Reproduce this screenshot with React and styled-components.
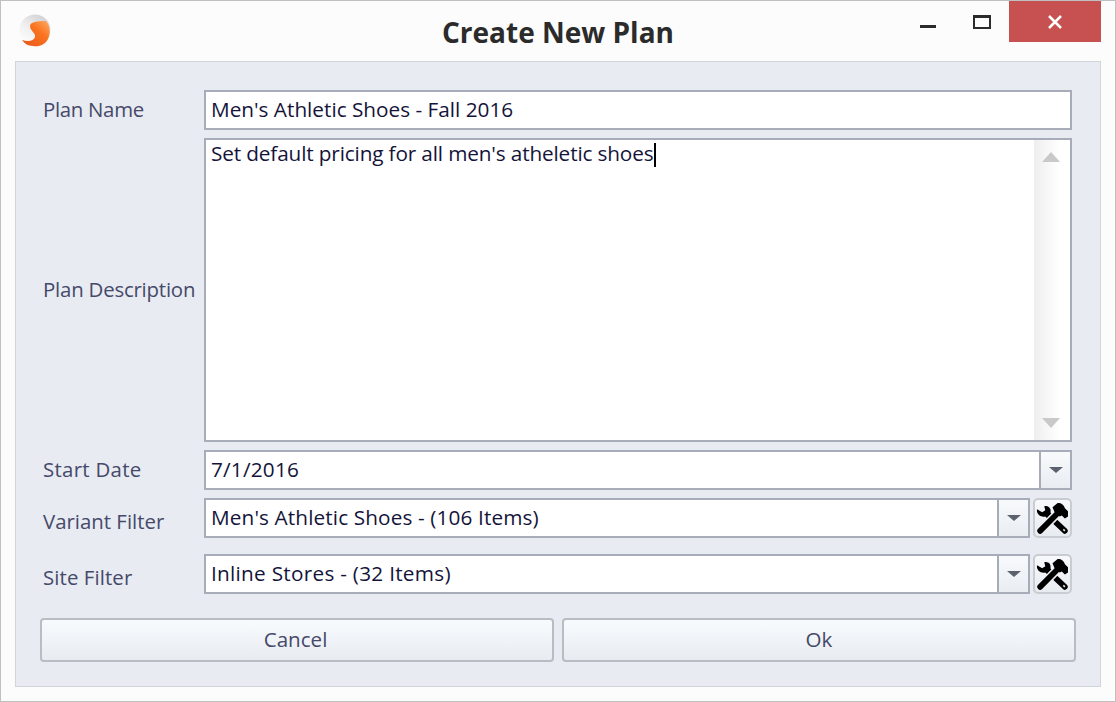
import React from "react";
import styled, { createGlobalStyle } from "styled-components";

const GlobalStyle = createGlobalStyle`
  html, body { margin: 0; padding: 0; background: #fcfcfc; }
  body { font-family: "Open Sans", "Noto Sans", sans-serif; }
`;

const Window = styled.div`
  box-sizing: border-box;
  width: 1116px;
  height: 702px;
  background: #fcfcfc;
  border: 1px solid #bfc0c1;
  display: flex;
  flex-direction: column;
`;

const TitleBar = styled.header`
  height: 60px;
  flex: none;
  display: grid;
  grid-template-columns: 1fr auto 1fr;
  align-items: flex-start;
`;

const AppLogo = styled.svg`
  width: 32px;
  height: 33px;
  margin: 13px 0 0 18px;
`;

const Title = styled.h1`
  margin: 12px 0 0;
  font-size: 28px;
  line-height: 38px;
  font-weight: 700;
  color: #2b2b2b;
`;

const WindowControls = styled.div`
  display: flex;
  justify-content: flex-end;
  margin-right: 14px;
`;

const ControlButton = styled.div`
  width: ${(p) => p.$w}px;
  height: 41px;
  display: flex;
  align-items: center;
  justify-content: center;
  background: ${(p) => (p.$close ? "#c75050" : "transparent")};
`;

const Panel = styled.main`
  box-sizing: border-box;
  width: 1086px;
  height: 626px;
  margin-left: 14px;
  background: #e8ebf1;
  border: 1px solid #d1d4d8;
  padding: 28px 24px 0;
`;

const FormGrid = styled.div`
  display: grid;
  grid-template-columns: 164px 1fr;
  row-gap: 8px;
  align-items: center;
  padding-right: 4px;
`;

const Label = styled.label`
  padding-left: 3px;
  font-size: 20.4px;
  line-height: 28px;
  color: #45496a;
  white-space: nowrap;
  position: relative;
  top: ${(p) => p.$shift || 0}px;
  margin-top: ${(p) => p.$gap || 0}px;
  letter-spacing: ${(p) => p.$track || 0}px;
`;

const Field = styled.div`
  box-sizing: border-box;
  height: ${(p) => p.$h || 40}px;
  background: #fff;
  border: 2px solid #a6adb9;
  display: flex;
  min-width: 0;
  flex: 1;
`;

const Value = styled.div`
  flex: 1;
  padding: 0 5px;
  font-size: 20.75px;
  line-height: ${(p) => (p.$multi ? 26 : 34)}px;
  letter-spacing: ${(p) => p.$track || 0}px;
  color: #14143a;
  white-space: nowrap;
`;

const Caret = styled.span`
  display: inline-block;
  width: 2px;
  height: 24px;
  margin-left: 1px;
  background: #000;
  vertical-align: -6px;
`;

const Scrollbar = styled.div`
  box-sizing: border-box;
  width: 36px;
  display: flex;
  flex-direction: column;
  justify-content: space-between;
  align-items: center;
  padding: 12px 2px 12px 0;
  background: linear-gradient(90deg, #eeeeef, #ffffff 70%);
`;

const Arrow = styled.i`
  width: 0;
  height: 0;
  border-left: 9px solid transparent;
  border-right: 9px solid transparent;
  ${(p) => (p.$up ? "border-bottom" : "border-top")}: 10px solid #c9c9c9;
`;

const DropButton = styled.div`
  box-sizing: border-box;
  width: 31px;
  flex: none;
  border-left: 2px solid #a6adb9;
  background: linear-gradient(180deg, #f8fafc, #e9edf2);
  display: flex;
  align-items: center;
  justify-content: center;
`;

const DropArrow = styled.i`
  width: 0;
  height: 0;
  border-left: 7px solid transparent;
  border-right: 7px solid transparent;
  border-top: 6px solid #5c626d;
`;

const FilterRow = styled.div`
  display: flex;
  gap: 3px;
  min-width: 0;
  margin-top: ${(p) => p.$gap || 0}px;
`;

const ToolButton = styled.div`
  box-sizing: border-box;
  width: 39px;
  height: 40px;
  flex: none;
  border: 2px solid #c9ccd1;
  border-radius: 5px;
  background: linear-gradient(180deg, #f7f9fc, #e8ebf0);
  display: flex;
  align-items: center;
  justify-content: center;
`;

const Actions = styled.div`
  display: grid;
  grid-template-columns: 1fr 1fr;
  column-gap: 8px;
  margin-top: 24px;
`;

const ActionButton = styled.button`
  box-sizing: border-box;
  height: 44px;
  padding: 0 ${(p) => p.$nudge || 0}px 2px 0;
  border: 2px solid #b9bcc2;
  border-radius: 4px;
  background: linear-gradient(180deg, #f8fbfe, #e8ebf0);
  font-family: inherit;
  font-size: 20.6px;
  color: #45496a;
`;

function ToolsIcon() {
  return (
    <svg width="33" height="33" viewBox="0 0 32 32">
      <path
        d="M1 7 L6 10 L9 8 L8 4 C12 3 15 6 14 10 L16 13 L12 16 L9 14 C5 15 0 12 1 7 Z"
        fill="#000"
      />
      <path d="M12 13 L28 28" stroke="#000" strokeWidth="5.500" strokeLinecap="round" />
      <path d="M26.500 26.500 L28 28" stroke="#e8ebf0" strokeWidth="1.500" />
      <path d="M19 13 L13 19" stroke="#eef0f4" strokeWidth="8.500" />
      <path d="M21 11 L4 28" stroke="#000" strokeWidth="5.500" strokeLinecap="round" />
      <path
        d="M16 5 L21 1 C25 1 27 3 28 6 L31 9 L31 14 L28 16 L25 13 L23 14 L18 10 Z"
        fill="#000"
      />
    </svg>
  );
}

function Logo() {
  return (
    <AppLogo viewBox="0 0 32 33">
      <defs>
        <linearGradient id="logoBase" x1="0.8" y1="0" x2="0.2" y2="1">
          <stop offset="0" stopColor="#cfcfd1" />
          <stop offset="0.5" stopColor="#eeeeee" />
          <stop offset="1" stopColor="#ffffff" />
        </linearGradient>
        <linearGradient id="logoSwirl" x1="0" y1="1" x2="1" y2="0">
          <stop offset="0" stopColor="#e8561c" />
          <stop offset="0.6" stopColor="#f9731f" />
          <stop offset="1" stopColor="#ffad66" />
        </linearGradient>
      </defs>
      <circle cx="16" cy="16" r="15.500" fill="url(#logoBase)" />
      <path
        d="M3 26 C9 28 15 27 16 23 C17 19 11 17 11 12 C11 8 18 7 27 7 C31 11 32 19 29 25 C26 31 20 33 14 32 C9 32 5 29 3 26 Z"
        fill="url(#logoSwirl)"
      />
    </AppLogo>
  );
}

function ComboField({ value, track }) {
  return (
    <Field>
      <Value $track={track}>{value}</Value>
      <DropButton>
        <DropArrow />
      </DropButton>
    </Field>
  );
}

export default function App() {
  return (
    <>
      <GlobalStyle />
      <Window>
        <TitleBar>
          <Logo />
          <Title>Create New Plan</Title>
          <WindowControls>
            <ControlButton $w={54}>
              <svg width="16" height="16" viewBox="0 0 16 16">
                <rect y="11" width="16" height="3" fill="#2b2b2b" />
              </svg>
            </ControlButton>
            <ControlButton $w={54}>
              <svg width="18" height="14" viewBox="0 0 18 14">
                <path d="M1 1 H17 V13 H1 Z M1 2 H17" fill="none" stroke="#2b2b2b" strokeWidth="2" />
              </svg>
            </ControlButton>
            <ControlButton $w={92} $close>
              <svg width="16" height="14" viewBox="0 0 16 14">
                <path d="M2 1 L14 13 M14 1 L2 13" stroke="#fff" strokeWidth="2.500" />
              </svg>
            </ControlButton>
          </WindowControls>
        </TitleBar>
        <Panel>
          <FormGrid>
            <Label $shift={-1} $track={-0.3}>Plan Name</Label>
            <Field>
              <Value>Men's Athletic Shoes - Fall 2016</Value>
            </Field>
            <Label $shift={-1} $track={-0.2}>Plan Description</Label>
            <Field $h={304}>
              <Value $multi $track={-0.14}>
                Set default pricing for all men's atheletic shoes
                <Caret />
              </Value>
              <Scrollbar>
                <Arrow $up />
                <Arrow />
              </Scrollbar>
            </Field>
            <Label $shift={-1} $track={0.3}>Start Date</Label>
            <ComboField value="7/1/2016" track={0.2} />
            <Label $shift={3}>Variant Filter</Label>
            <FilterRow>
              <ComboField value="Men's Athletic Shoes - (106 Items)" track={0.12} />
              <ToolButton>
                <ToolsIcon />
              </ToolButton>
            </FilterRow>
            <Label $shift={3} $gap={8} $track={0.1}>Site Filter</Label>
            <FilterRow $gap={8}>
              <ComboField value="Inline Stores - (32 Items)" track={0.27} />
              <ToolButton>
                <ToolsIcon />
              </ToolButton>
            </FilterRow>
          </FormGrid>
          <Actions>
            <ActionButton $nudge={3}>Cancel</ActionButton>
            <ActionButton>Ok</ActionButton>
          </Actions>
        </Panel>
      </Window>
    </>
  );
}
